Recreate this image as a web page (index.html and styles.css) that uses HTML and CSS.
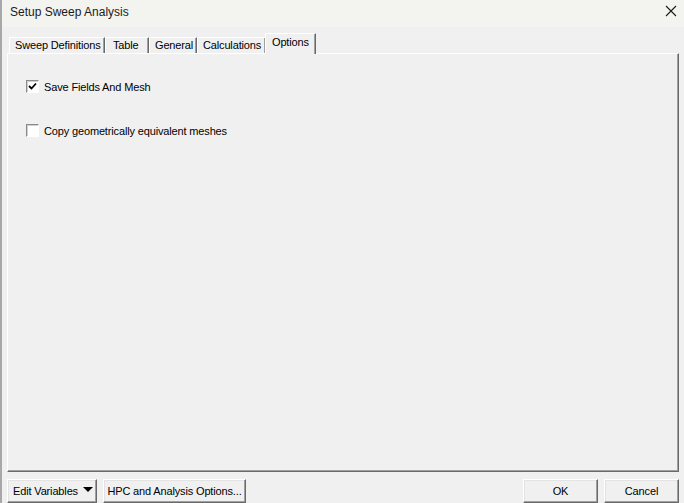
FILE: index.html
```html
<!DOCTYPE html>
<html>
<head>
<meta charset="utf-8">
<link rel="stylesheet" href="styles.css">
</head>
<body>
<div class="window">
  <div class="titlebar">
    <span class="title">Setup Sweep Analysis</span>
    <svg class="close" width="12" height="12" viewBox="0 0 12 12"><path d="M1 1 L11 11 M11 1 L1 11" stroke="#1a1a1a" stroke-width="1.1" fill="none"/></svg>
  </div>
  <div class="content">
    <div class="tabs">
      <div class="tab t1">Sweep Definitions</div>
      <div class="tab t2">Table</div>
      <div class="tab t3">General</div>
      <div class="tab t4">Calculations</div>
      <div class="tab active">Options</div>
    </div>
    <div class="panel">
      <label class="check first"><span class="box checked"><svg width="9" height="9" viewBox="0 0 9 9"><path d="M1 4 L3.5 6.5 L8 1.5" stroke="#000" stroke-width="1.8" fill="none"/></svg></span><span>Save Fields And Mesh</span></label>
      <label class="check second"><span class="box"></span><span>Copy geometrically equivalent meshes</span></label>
    </div>
    <div class="footer">
      <div class="btn b-edit">Edit Variables <span class="tri"></span></div>
      <div class="btn b-hpc">HPC and Analysis Options...</div>
      <div class="spacer"></div>
      <div class="btn b-ok">OK</div>
      <div class="btn b-cancel">Cancel</div>
    </div>
  </div>
</div>
</body>
</html>
```
FILE: styles.css
```css
html, body {
  margin: 0;
  padding: 0;
}
body {
  width: 684px;
  height: 503px;
  overflow: hidden;
  background: #f0f0f0;
  font-family: "Liberation Sans", Arial, sans-serif;
  font-size: 11px;
  letter-spacing: -0.15px;
  color: #000;
}
.window {
  height: 503px;
  display: flex;
  flex-direction: column;
  border-left: 2px solid #a8a8a8;
  box-sizing: border-box;
}
.titlebar {
  height: 27px;
  flex: none;
  background: #f3f3f0;
  display: flex;
  align-items: center;
  padding-left: 8px;
  padding-right: 8px;
}
.title {
  font-size: 12px;
  letter-spacing: 0;
  color: #1b1b1b;
  flex: 1;
  margin-top: -4px;
}
.close {
  margin-top: -6px;
  margin-right: -1px;
}
.content {
  flex: 1;
  display: flex;
  flex-direction: column;
  padding: 0 5px 0 5px;
}
.tabs {
  display: flex;
  align-items: flex-end;
  height: 26px;
  padding-left: 2px;
  position: relative;
  z-index: 1;
}
.tab {
  height: 15px;
  line-height: 15px;
  box-sizing: content-box;
  padding: 0 0 0 5px;
  border-top: 1px solid #fff;
  border-left: 1px solid #fff;
  border-right: 1px solid #696969;
  box-shadow: inset -1px 0 #a0a0a0;
  white-space: nowrap;
  flex: none;
}
.t1 { width: 89px; }
.t2 { width: 35px; padding-left: 7px; }
.t3 { width: 41px; }
.t4 { width: 62px; }
.tab.active {
  height: 20px;
  line-height: 17px;
  margin-left: -1px;
  margin-bottom: -1px;
  width: 43px;
  padding-left: 6px;
  background: #f0f0f0;
}
.panel {
  height: 419px;
  flex: none;
  box-sizing: border-box;
  border-top: 1px solid #fff;
  border-left: 1px solid #fff;
  border-right: 1px solid #696969;
  border-bottom: 1px solid #696969;
  box-shadow: inset -1px -1px #a0a0a0;
  padding: 26px 0 0 18px;
  display: flex;
  flex-direction: column;
}
.check {
  display: flex;
  align-items: center;
  height: 13px;
}
.check.second {
  margin-top: 31px;
}
.box {
  width: 13px;
  height: 13px;
  box-sizing: border-box;
  border: 1px solid;
  border-color: #8a8a8a #ffffff #ffffff #8a8a8a;
  box-shadow: inset 1px 1px #d0d0d0;
  background: #fff;
  margin-right: 5px;
  display: flex;
  align-items: center;
  justify-content: center;
}
.footer {
  display: flex;
  padding-top: 7px;
  gap: 6px;
}
.spacer { flex: 1; }
.btn {
  height: 24px;
  flex: none;
  box-sizing: border-box;
  border: 1px solid;
  border-color: #fff #696969 #696969 #fff;
  box-shadow: inset -1px -1px #a0a0a0, inset 1px 1px #e3e3e3;
  display: flex;
  align-items: center;
  justify-content: center;
  white-space: nowrap;
  font-size: 11px;
  padding-bottom: 0;
}
.b-edit { width: 90px; justify-content: flex-start; padding-left: 5px; }
.b-hpc { width: 143px; }
.b-ok { width: 75px; }
.b-cancel { width: 75px; }
.tri {
  width: 0;
  height: 0;
  border-left: 5px solid transparent;
  border-right: 5px solid transparent;
  border-top: 5px solid #000;
  margin-left: 5px;
  margin-top: -3px;
}
```
